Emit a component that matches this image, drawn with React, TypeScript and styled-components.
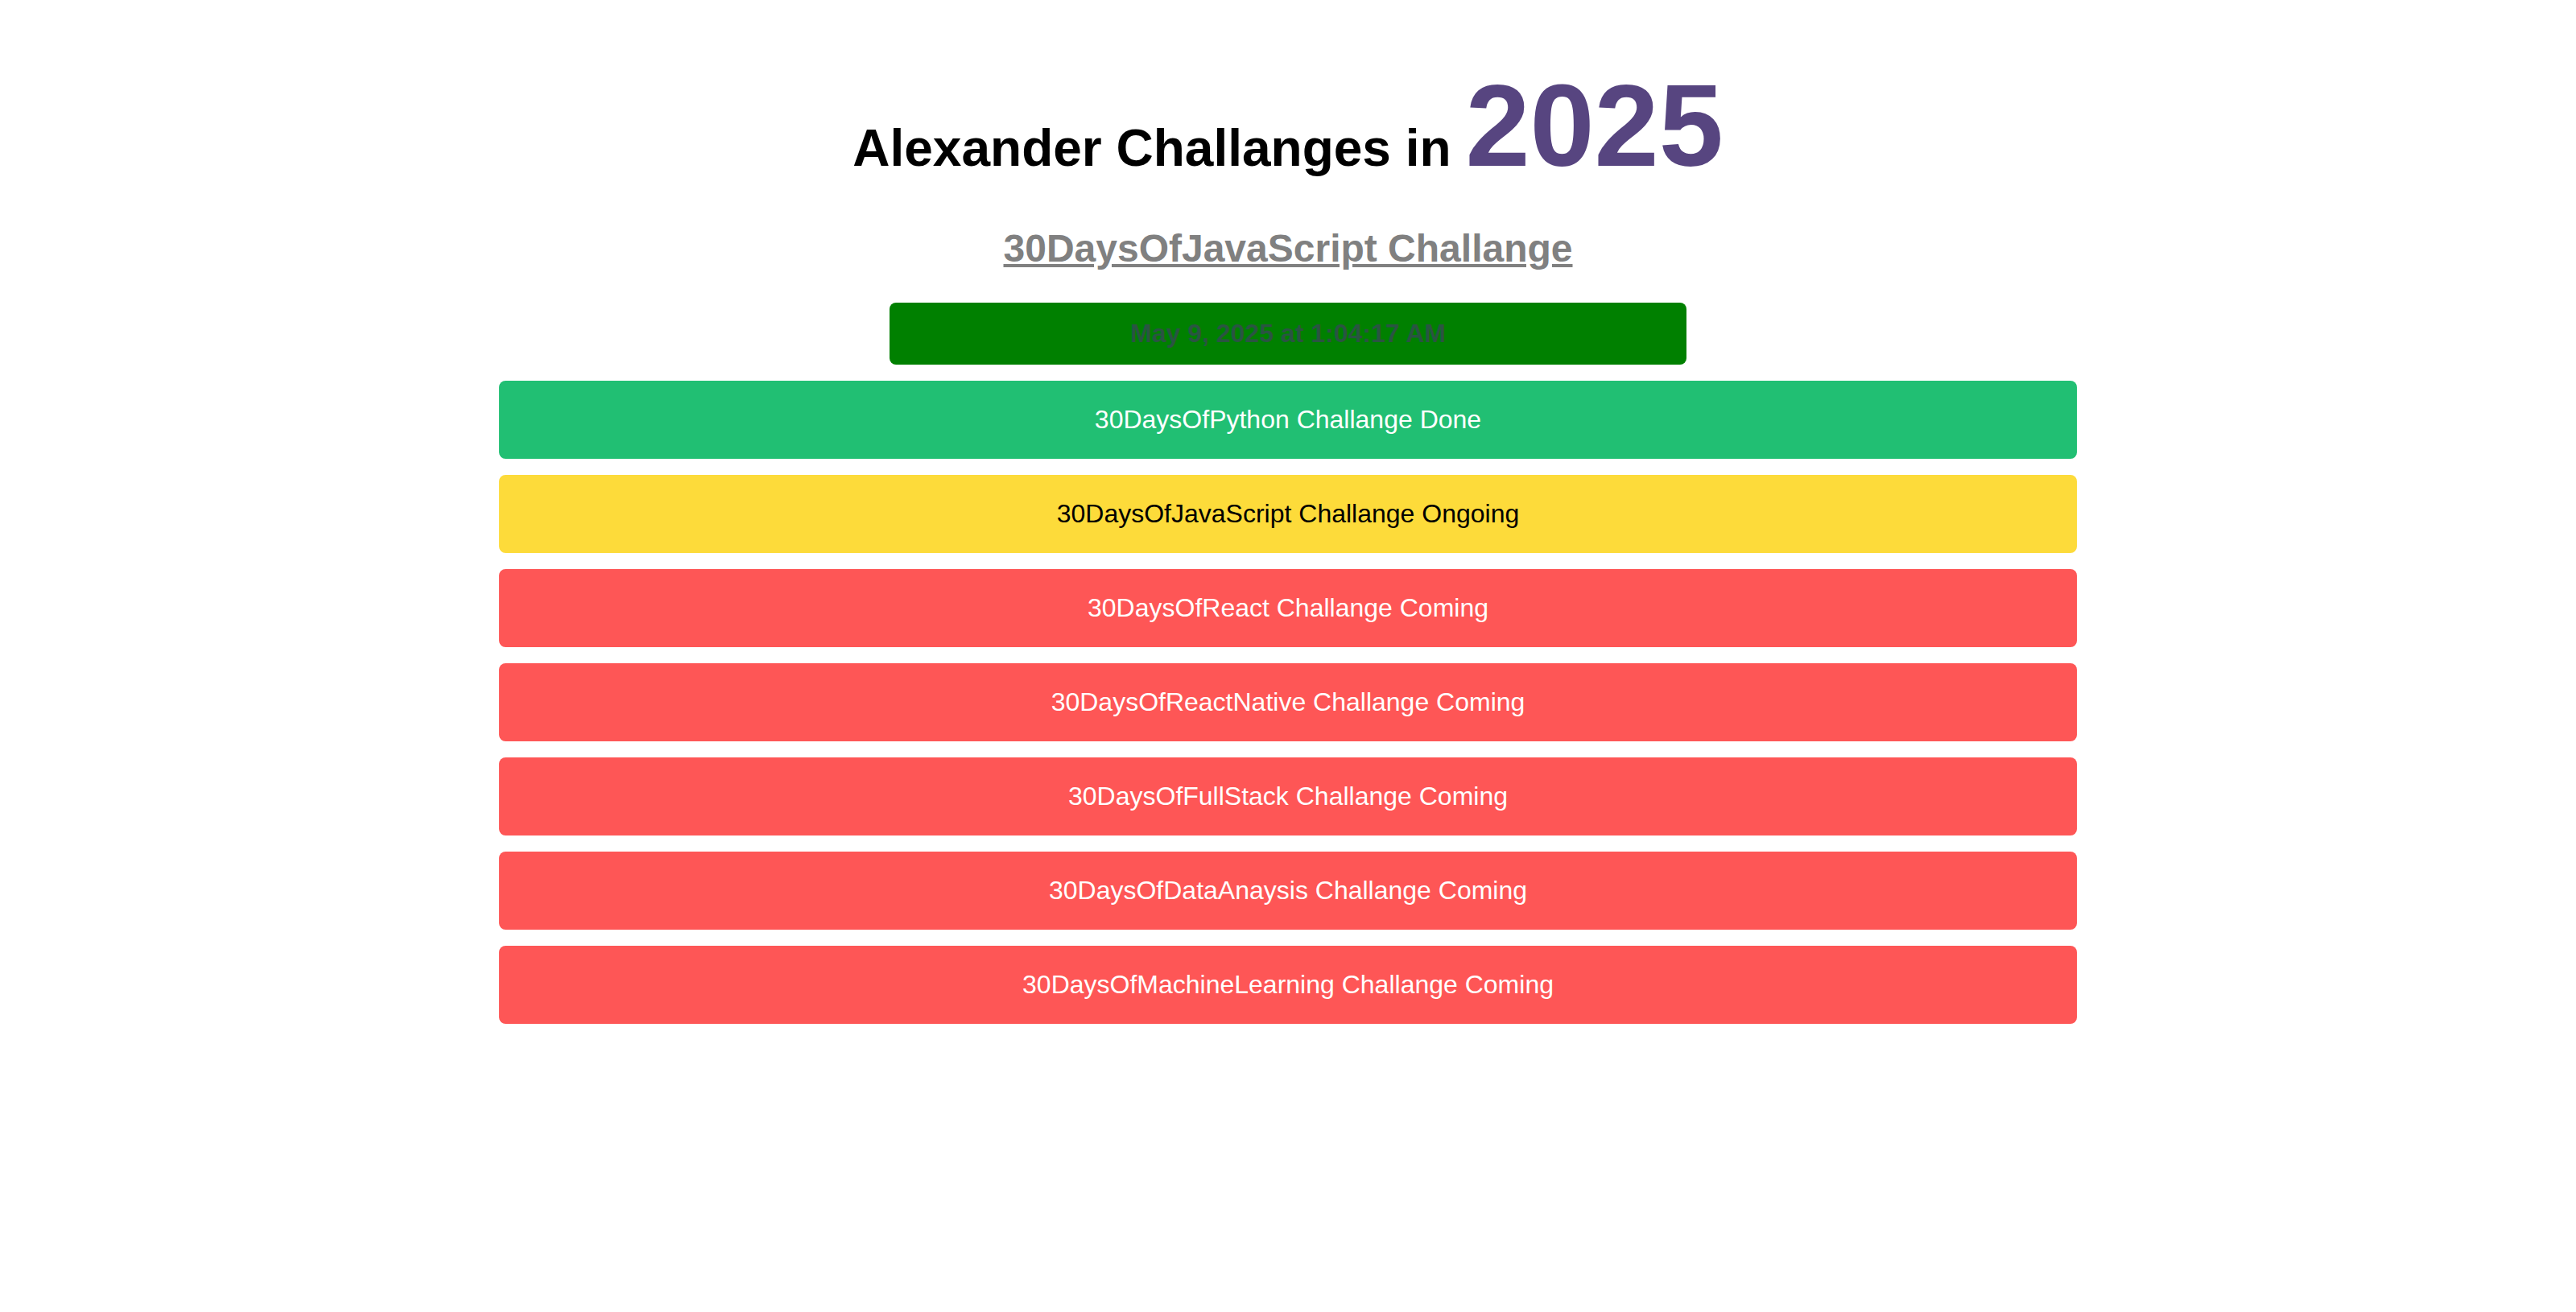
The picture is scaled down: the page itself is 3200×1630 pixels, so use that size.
import React from "react";
import styled, { createGlobalStyle } from "styled-components";

const GlobalStyle = createGlobalStyle`
  html, body {
    margin: 0;
    padding: 0;
    background: #ffffff;
    font-family: "Liberation Sans", Arial, sans-serif;
  }
`;

const Page = styled.main`
  display: flex;
  flex-direction: column;
  align-items: center;
  padding-top: 74px;
`;

const Title = styled.h1`
  margin: 0;
  font-size: 64px;
  font-weight: 700;
  line-height: normal;
  color: #000000;
  text-align: center;
`;

const Year = styled.span`
  font-size: 144px;
  color: #574580;
`;

const SubTitle = styled.h2`
  margin: 41px 0 0;
  font-size: 48px;
  font-weight: 700;
  line-height: normal;
  color: #808080;
  text-decoration: underline;
  text-align: center;
`;

const DateBox = styled.div`
  margin-top: 40px;
  width: 990px;
  height: 77px;
  box-sizing: border-box;
  display: flex;
  align-items: center;
  justify-content: center;
  background: #008000;
  border-radius: 8px;
  color: #2a5442;
  font-size: 32px;
  font-weight: 700;
`;

const List = styled.ul`
  list-style: none;
  margin: 20px 0 0;
  padding: 0;
  width: 1960px;
  display: flex;
  flex-direction: column;
  gap: 20px;
`;

type Status = "done" | "ongoing" | "coming";

const colors: Record<Status, { bg: string; fg: string }> = {
  done: { bg: "#21bf73", fg: "#ffffff" },
  ongoing: { bg: "#fddb3a", fg: "#000000" },
  coming: { bg: "#fe5656", fg: "#ffffff" },
};

const Row = styled.li<{ $status: Status }>`
  height: 97px;
  display: flex;
  align-items: center;
  justify-content: center;
  border-radius: 8px;
  font-size: 32px;
  background: ${(p) => colors[p.$status].bg};
  color: ${(p) => colors[p.$status].fg};
`;

const challenges: { name: string; status: Status; label: string }[] = [
  { name: "30DaysOfPython", status: "done", label: "Done" },
  { name: "30DaysOfJavaScript", status: "ongoing", label: "Ongoing" },
  { name: "30DaysOfReact", status: "coming", label: "Coming" },
  { name: "30DaysOfReactNative", status: "coming", label: "Coming" },
  { name: "30DaysOfFullStack", status: "coming", label: "Coming" },
  { name: "30DaysOfDataAnaysis", status: "coming", label: "Coming" },
  { name: "30DaysOfMachineLearning", status: "coming", label: "Coming" },
];

export default function App() {
  return (
    <>
      <GlobalStyle />
      <Page>
        <Title>
          Alexander Challanges in <Year>2025</Year>
        </Title>
        <SubTitle>30DaysOfJavaScript Challange</SubTitle>
        <DateBox>May 9, 2025 at 1:04:17 AM</DateBox>
        <List>
          {challenges.map((c) => (
            <Row key={c.name} $status={c.status}>
              {c.name} Challange {c.label}
            </Row>
          ))}
        </List>
      </Page>
    </>
  );
}
